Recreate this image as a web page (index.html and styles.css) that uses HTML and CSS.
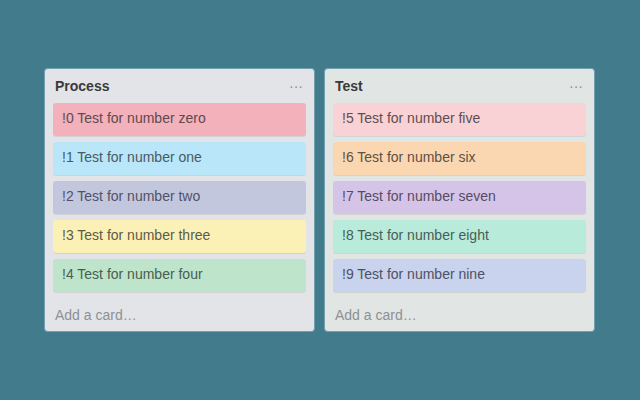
FILE: index.html
```html
<!DOCTYPE html>
<html>
<head>
<meta charset="utf-8">
<link rel="stylesheet" href="styles.css">
</head>
<body>
<div class="board">
  <div class="list list-a">
    <div class="list-header"><span class="list-title">Process</span><span class="menu">&middot;&middot;&middot;</span></div>
    <div class="cards">
      <div class="card c0">!0 Test for number zero</div>
      <div class="card c1">!1 Test for number one</div>
      <div class="card c2">!2 Test for number two</div>
      <div class="card c3">!3 Test for number three</div>
      <div class="card c4">!4 Test for number four</div>
    </div>
    <div class="add">Add a card…</div>
  </div>
  <div class="list list-b">
    <div class="list-header"><span class="list-title">Test</span><span class="menu">&middot;&middot;&middot;</span></div>
    <div class="cards">
      <div class="card c5">!5 Test for number five</div>
      <div class="card c6">!6 Test for number six</div>
      <div class="card c7">!7 Test for number seven</div>
      <div class="card c8">!8 Test for number eight</div>
      <div class="card c9">!9 Test for number nine</div>
    </div>
    <div class="add">Add a card…</div>
  </div>
</div>
</body>
</html>
```
FILE: styles.css
```css
html, body {
  margin: 0;
  padding: 0;
  width: 640px;
  height: 400px;
  background: #427b8c;
  font-family: "Liberation Sans", Arial, sans-serif;
  overflow: hidden;
}
.board {
  display: flex;
  gap: 11px;
  padding: 69px 0 0 45px;
}
.list {
  width: 269px;
  height: 262px;
  box-sizing: border-box;
  border-radius: 3px;
  display: flex;
  flex-direction: column;
  box-shadow: 0 0 0 1px rgba(200, 230, 240, 0.35);
}
.list-a { background: #e2e4e8; }
.list-b { background: #e1e5e3; }
.list-header {
  height: 34px;
  display: flex;
  align-items: center;
  justify-content: space-between;
  padding: 0 10px 0 10px;
  box-sizing: border-box;
}
.list-title {
  font-weight: bold;
  font-size: 14px;
  color: #3a3a3a;
}
.menu {
  font-size: 14px;
  color: #8c8c8c;
  padding-right: 1px;
}
.cards {
  display: flex;
  flex-direction: column;
  gap: 6px;
  padding: 0 8px;
}
.card {
  height: 33px;
  box-sizing: border-box;
  border-radius: 3px;
  padding: 0 9px 3px;
  display: flex;
  align-items: center;
  font-size: 14px;
  color: #4a4a55;
  box-shadow: 0 1px 0 rgba(0, 0, 0, 0.08);
}
.c0 { background: #f2b1bb; color: #5e4a50; }
.c1 { background: #b9e6f9; color: #4a5a62; }
.c2 { background: #c2c7de; color: #50526a; }
.c3 { background: #fbf1b6; color: #5e5a48; }
.c4 { background: #bee4cc; color: #465e50; }
.c5 { background: #f8d2d4; color: #5e4e52; }
.c6 { background: #fad7b1; color: #5e5046; }
.c7 { background: #d6c4e8; color: #544c64; }
.c8 { background: #b9ebdb; color: #465e56; }
.c9 { background: #c9d3ee; color: #4c5264; }
.add {
  flex: 1;
  display: flex;
  align-items: center;
  padding: 6px 10px 0;
  font-size: 14px;
  color: #8e9096;
}
```
